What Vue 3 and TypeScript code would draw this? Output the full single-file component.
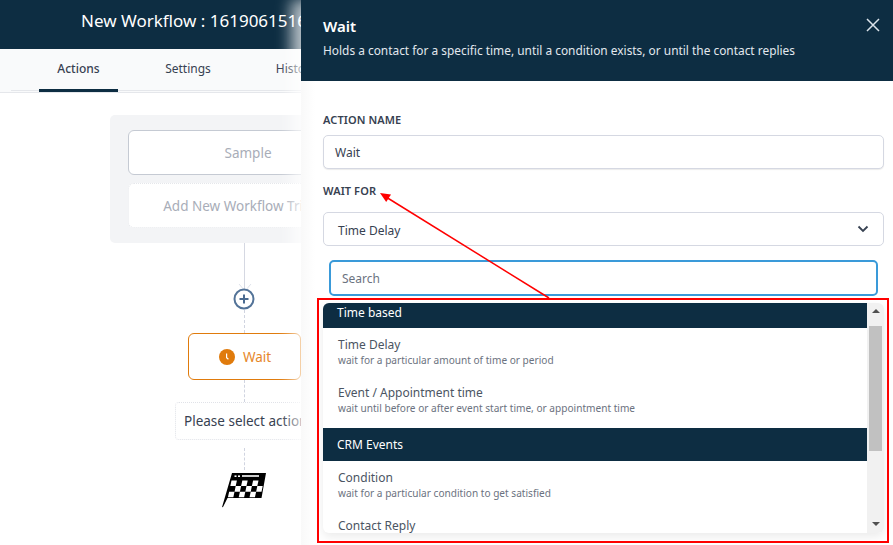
<script setup lang="ts">
interface Option { title: string; desc?: string }
interface Group { name: string; options: Option[] }
const groups: Group[] = [
  {
    name: 'Time based',
    options: [
      { title: 'Time Delay', desc: 'wait for a particular amount of time or period' },
      { title: 'Event / Appointment time', desc: 'wait until before or after event start time, or appointment time' },
    ],
  },
  {
    name: 'CRM Events',
    options: [
      { title: 'Condition', desc: 'wait for a particular condition to get satisfied' },
      { title: 'Contact Reply' },
    ],
  },
]
const tabs = ['Actions', 'Settings', 'History']
const cells: { x: number; y: number }[] = []
for (let r = 0; r < 3; r++) {
  for (let c = 0; c < 6; c++) {
    if ((r + c) % 2 === 0) cells.push({ x: c * 5.4, y: r * 5.6 })
  }
}
</script>

<template>
  <div class="page">
    <header class="topbar">
      <h1 class="wf-title">New Workflow : 1619061516</h1>
    </header>
    <nav class="tabs">
      <div class="tab-row">
        <a v-for="(t, i) in tabs" :key="t" class="tab" :class="{ active: i === 0 }">{{ t }}</a>
      </div>
    </nav>

    <main class="canvas">
      <section class="triggers">
        <div class="trigger sample">Sample</div>
        <div class="trigger add">Add New Workflow Trigger</div>
      </section>
      <div class="link solid">
        <svg class="arrow-head" width="14" height="8" viewBox="0 0 14 8"><path d="M1 0l6 7 6-7" fill="none" stroke="#dfe2ea" stroke-width="1" /></svg>
      </div>
      <svg class="plus" width="22" height="22" viewBox="0 0 22 22">
        <circle cx="11" cy="11" r="9.5" fill="#fff" stroke="#537398" stroke-width="2" />
        <path d="M11 6.5v9M6.5 11h9" stroke="#4a6a90" stroke-width="2" />
      </svg>
      <div class="link dashed d1"></div>
      <div class="node">
        <svg width="16" height="16" viewBox="0 0 16 16">
          <circle cx="8" cy="8" r="8" fill="#e07b0c" />
          <path d="M7.6 4.5v4.2l1.8 1.6" fill="none" stroke="#fff" stroke-width="1.2" />
        </svg>
        <span>Wait</span>
      </div>
      <div class="link dashed d2"></div>
      <div class="placeholder">Please select action</div>
      <div class="link dashed d3"></div>
      <svg class="flag" width="46" height="36" viewBox="0 0 46 36">
        <path d="M11 1h34l-4.500 25H6.500L2 35l-1 .2Z" fill="#000" />
        <rect x="21" y="3.200" width="17" height="1.600" fill="#fff" />
        <rect x="13.500" y="3.400" width="2" height="1.600" fill="#fff" />
        <rect x="17" y="3.400" width="2" height="1.600" fill="#fff" />
        <g transform="translate(10.500 8.500) skewX(-12)">
          <rect v-for="(c, i) in cells" :key="i" :x="c.x" :y="c.y" width="5.400" height="5.600" fill="#fff" />
        </g>
      </svg>
    </main>

    <aside class="drawer">
      <div class="drawer-head">
        <div>
          <h2>Wait</h2>
          <p>Holds a contact for a specific time, until a condition exists, or until the contact replies</p>
        </div>
        <svg class="close" width="16" height="16" viewBox="0 0 16 16"><path d="M2 2l12 12M14 2L2 14" stroke="#dbe3ea" stroke-width="1.500" /></svg>
      </div>
      <div class="drawer-body">
        <label class="field-label">ACTION NAME</label>
        <div class="input">Wait</div>
        <label class="field-label second">WAIT FOR</label>
        <div class="select">
          <span class="select-text">Time Delay</span>
          <svg width="12" height="8" viewBox="0 0 12 8"><path d="M1.500 1.500L6 6l4.500-4.500" fill="none" stroke="#374151" stroke-width="1.800" /></svg>
        </div>
        <div class="search">Search</div>
        <div class="list">
          <div class="list-scroll">
            <template v-for="(g, gi) in groups" :key="g.name">
              <div class="group" :class="gi === 0 ? 'first' : 'second-group'">{{ g.name }}</div>
              <div v-for="o in g.options" :key="o.title" class="option">
                <div class="opt-title">{{ o.title }}</div>
                <div v-if="o.desc" class="opt-desc">{{ o.desc }}</div>
              </div>
            </template>
          </div>
          <div class="scrollbar">
            <span class="tri up"></span>
            <span class="thumb"></span>
            <span class="tri down"></span>
          </div>
        </div>
      </div>
    </aside>

    <div class="red-box"></div>
    <svg class="annot" width="893" height="545" viewBox="0 0 893 545">
      <line x1="549" y1="298" x2="386" y2="197" stroke="#f00" stroke-width="1.500" />
      <path d="M380 193l11 1.500-4.800 7.500Z" fill="#f00" />
    </svg>
  </div>
</template>

<style>
html, body { margin: 0; background: #fff; }
</style>

<style scoped>
.page {
  position: relative;
  width: 893px;
  height: 545px;
  overflow: hidden;
  font-family: "Noto Sans", "Open Sans", sans-serif;
  color: #374151;
  background: #fff;
}
.topbar {
  height: 49px;
  background: #0d2d42;
  display: flex;
  align-items: center;
  padding-left: 81px;
  box-sizing: border-box;
}
.wf-title {
  margin: 0 0 8px;
  font-size: 17px;
  font-weight: 400;
  color: #fff;
  white-space: nowrap;
}
.tabs {
  height: 44px;
  background: #f9fafb;
  border-bottom: 1px solid #e5e7eb;
  box-sizing: border-box;
  padding-left: 11px;
}
.tab-row {
  height: 42px;
  box-sizing: border-box;
  border-bottom: 1px solid #e5e7eb;
  padding-left: 28px;
  display: flex;
}
.tab {
  height: 43px;
  box-sizing: border-box;
  font-size: 12px;
  line-height: 39px;
  text-align: center;
  color: #374151;
}
.tab:nth-child(1) { width: 79px; font-weight: 500; border-bottom: 3px solid #0d2d42; height: 43px; margin-bottom: -1px; }
.tab:nth-child(2) { width: 140px; }
.tab:nth-child(3) { width: 76px; }
.canvas {
  display: flex;
  flex-direction: column;
  align-items: center;
  width: 488px;
  padding-top: 22px;
}
.triggers {
  width: 268px;
  height: 128px;
  box-sizing: border-box;
  background: #f3f4f6;
  border-radius: 5px;
  padding: 15px 18px;
  display: flex;
  flex-direction: column;
  gap: 8px;
  flex: none;
}
.trigger {
  height: 45px;
  box-sizing: border-box;
  background: #fff;
  border-radius: 6px;
  display: flex;
  align-items: center;
  justify-content: center;
  padding-left: 8px;
  font-size: 13.500px;
  color: #a8adb8;
  white-space: nowrap;
}
.sample { border: 1px solid #c5cad3; }
.add { border: 1px dotted #e5e7eb; }
.link { flex: none; width: 0; position: relative; }
.solid { height: 46px; border-left: 1px solid #d5d8e2; }
.arrow-head { position: absolute; left: -7px; bottom: -3px; }
.plus { flex: none; margin-top: -1px; position: relative; z-index: 1; }
.dashed { border-left: 1px dashed #d0d4e0; }
.d1 { height: 23px; }
.node {
  flex: none;
  width: 113px;
  height: 47px;
  box-sizing: border-box;
  border: 1px solid #e07b0c;
  border-radius: 6px;
  display: flex;
  align-items: center;
  justify-content: center;
  gap: 8px;
  padding-left: 2px;
  color: #e6872a;
  font-size: 13.500px;
}
.d2 { height: 22px; }
.placeholder {
  flex: none;
  width: 138px;
  height: 38px;
  box-sizing: border-box;
  border: 1px dotted #e0e2e8;
  border-radius: 4px;
  display: flex;
  align-items: center;
  padding-left: 8px;
  font-size: 13.500px;
  color: #374151;
  white-space: nowrap;
}
.d3 { height: 22px; margin-top: 8px; }
.flag { flex: none; margin-top: 2px; }
.drawer {
  position: absolute;
  left: 301px;
  top: 0;
  width: 592px;
  height: 545px;
  background: #fff;
  box-shadow: -10px 0 14px rgba(255, 255, 255, 0.7);
}
.drawer-head {
  height: 81px;
  background: #0d2d42;
  color: #fff;
  box-sizing: border-box;
  padding: 16px 12px 0 22px;
  display: flex;
  justify-content: space-between;
  align-items: flex-start;
}
.drawer-head h2 { margin: 0; font-size: 15px; font-weight: 600; line-height: 20px; }
.drawer-head p { margin: 5px 0 0; font-size: 11.900px; line-height: 18px; color: #e2e8ee; }
.close { margin-top: 1px; }
.drawer-body {
  background: linear-gradient(90deg, #f9f9f9, #fff 14px);
  height: 464px;
  box-sizing: border-box;
  padding: 31px 9px 0 22px;
}
.field-label {
  display: block;
  font-size: 11px;
  font-weight: 600;
  line-height: 16px;
  color: #374151;
  letter-spacing: 0.1px;
}
.second { margin-top: 14px; }
.input, .select {
  box-sizing: border-box;
  height: 34px;
  margin-top: 8px;
  background: #fff;
  border: 1px solid #d5d8e2;
  border-radius: 5px;
  font-size: 12px;
  display: flex;
  align-items: center;
  color: #374151;
}
.input { padding-left: 11px; box-shadow: 0 1px 1px rgba(0, 0, 0, 0.08); margin-top: 7px; }
.select { padding: 0 14px; justify-content: space-between; margin-top: 13px; }
.select-text { padding-top: 2px; }
.search {
  box-sizing: border-box;
  width: 549px;
  height: 36px;
  margin: 14px 0 0 6px;
  border: 2px solid #3a9ad9;
  border-radius: 5px;
  font-size: 12px;
  color: #6b7280;
  display: flex;
  align-items: center;
  padding-left: 11px;
}
.list {
  position: relative;
  display: flex;
  width: 561px;
  height: 230px;
  margin-top: 7px;
  background: #fff;
  border-radius: 6px;
  overflow: hidden;
  box-shadow: 0 4px 10px rgba(0, 0, 0, 0.08);
}
.list-scroll { flex: 1; overflow: hidden; }
.group {
  background: #0d2d42;
  color: #fff;
  font-size: 12px;
  padding-left: 14px;
}
.first { height: 25px; line-height: 19px; }
.second-group { height: 33px; line-height: 34px; margin-top: 4px; }
.option { padding: 8px 15px 0; height: 48px; box-sizing: border-box; }
.opt-title { font-size: 12px; line-height: 18px; color: #4b5563; }
.opt-desc { font-size: 10.100px; line-height: 13px; color: #6b7280; }
.scrollbar {
  flex: none;
  width: 17px;
  background: #f1f1f1;
  position: relative;
}
.thumb {
  position: absolute;
  left: 2px;
  top: 23px;
  width: 13px;
  height: 125px;
  background: #c1c1c1;
}
.tri {
  position: absolute;
  left: 4.500px;
  width: 0;
  height: 0;
  border-left: 4px solid transparent;
  border-right: 4px solid transparent;
}
.up { top: 6px; border-bottom: 4px solid #505050; }
.down { bottom: 7px; border-top: 4px solid #505050; }
.red-box {
  position: absolute;
  left: 317px;
  top: 298px;
  width: 572px;
  height: 245px;
  box-sizing: border-box;
  border: 2px solid #f00;
}
.annot { position: absolute; left: 0; top: 0; pointer-events: none; }
</style>
